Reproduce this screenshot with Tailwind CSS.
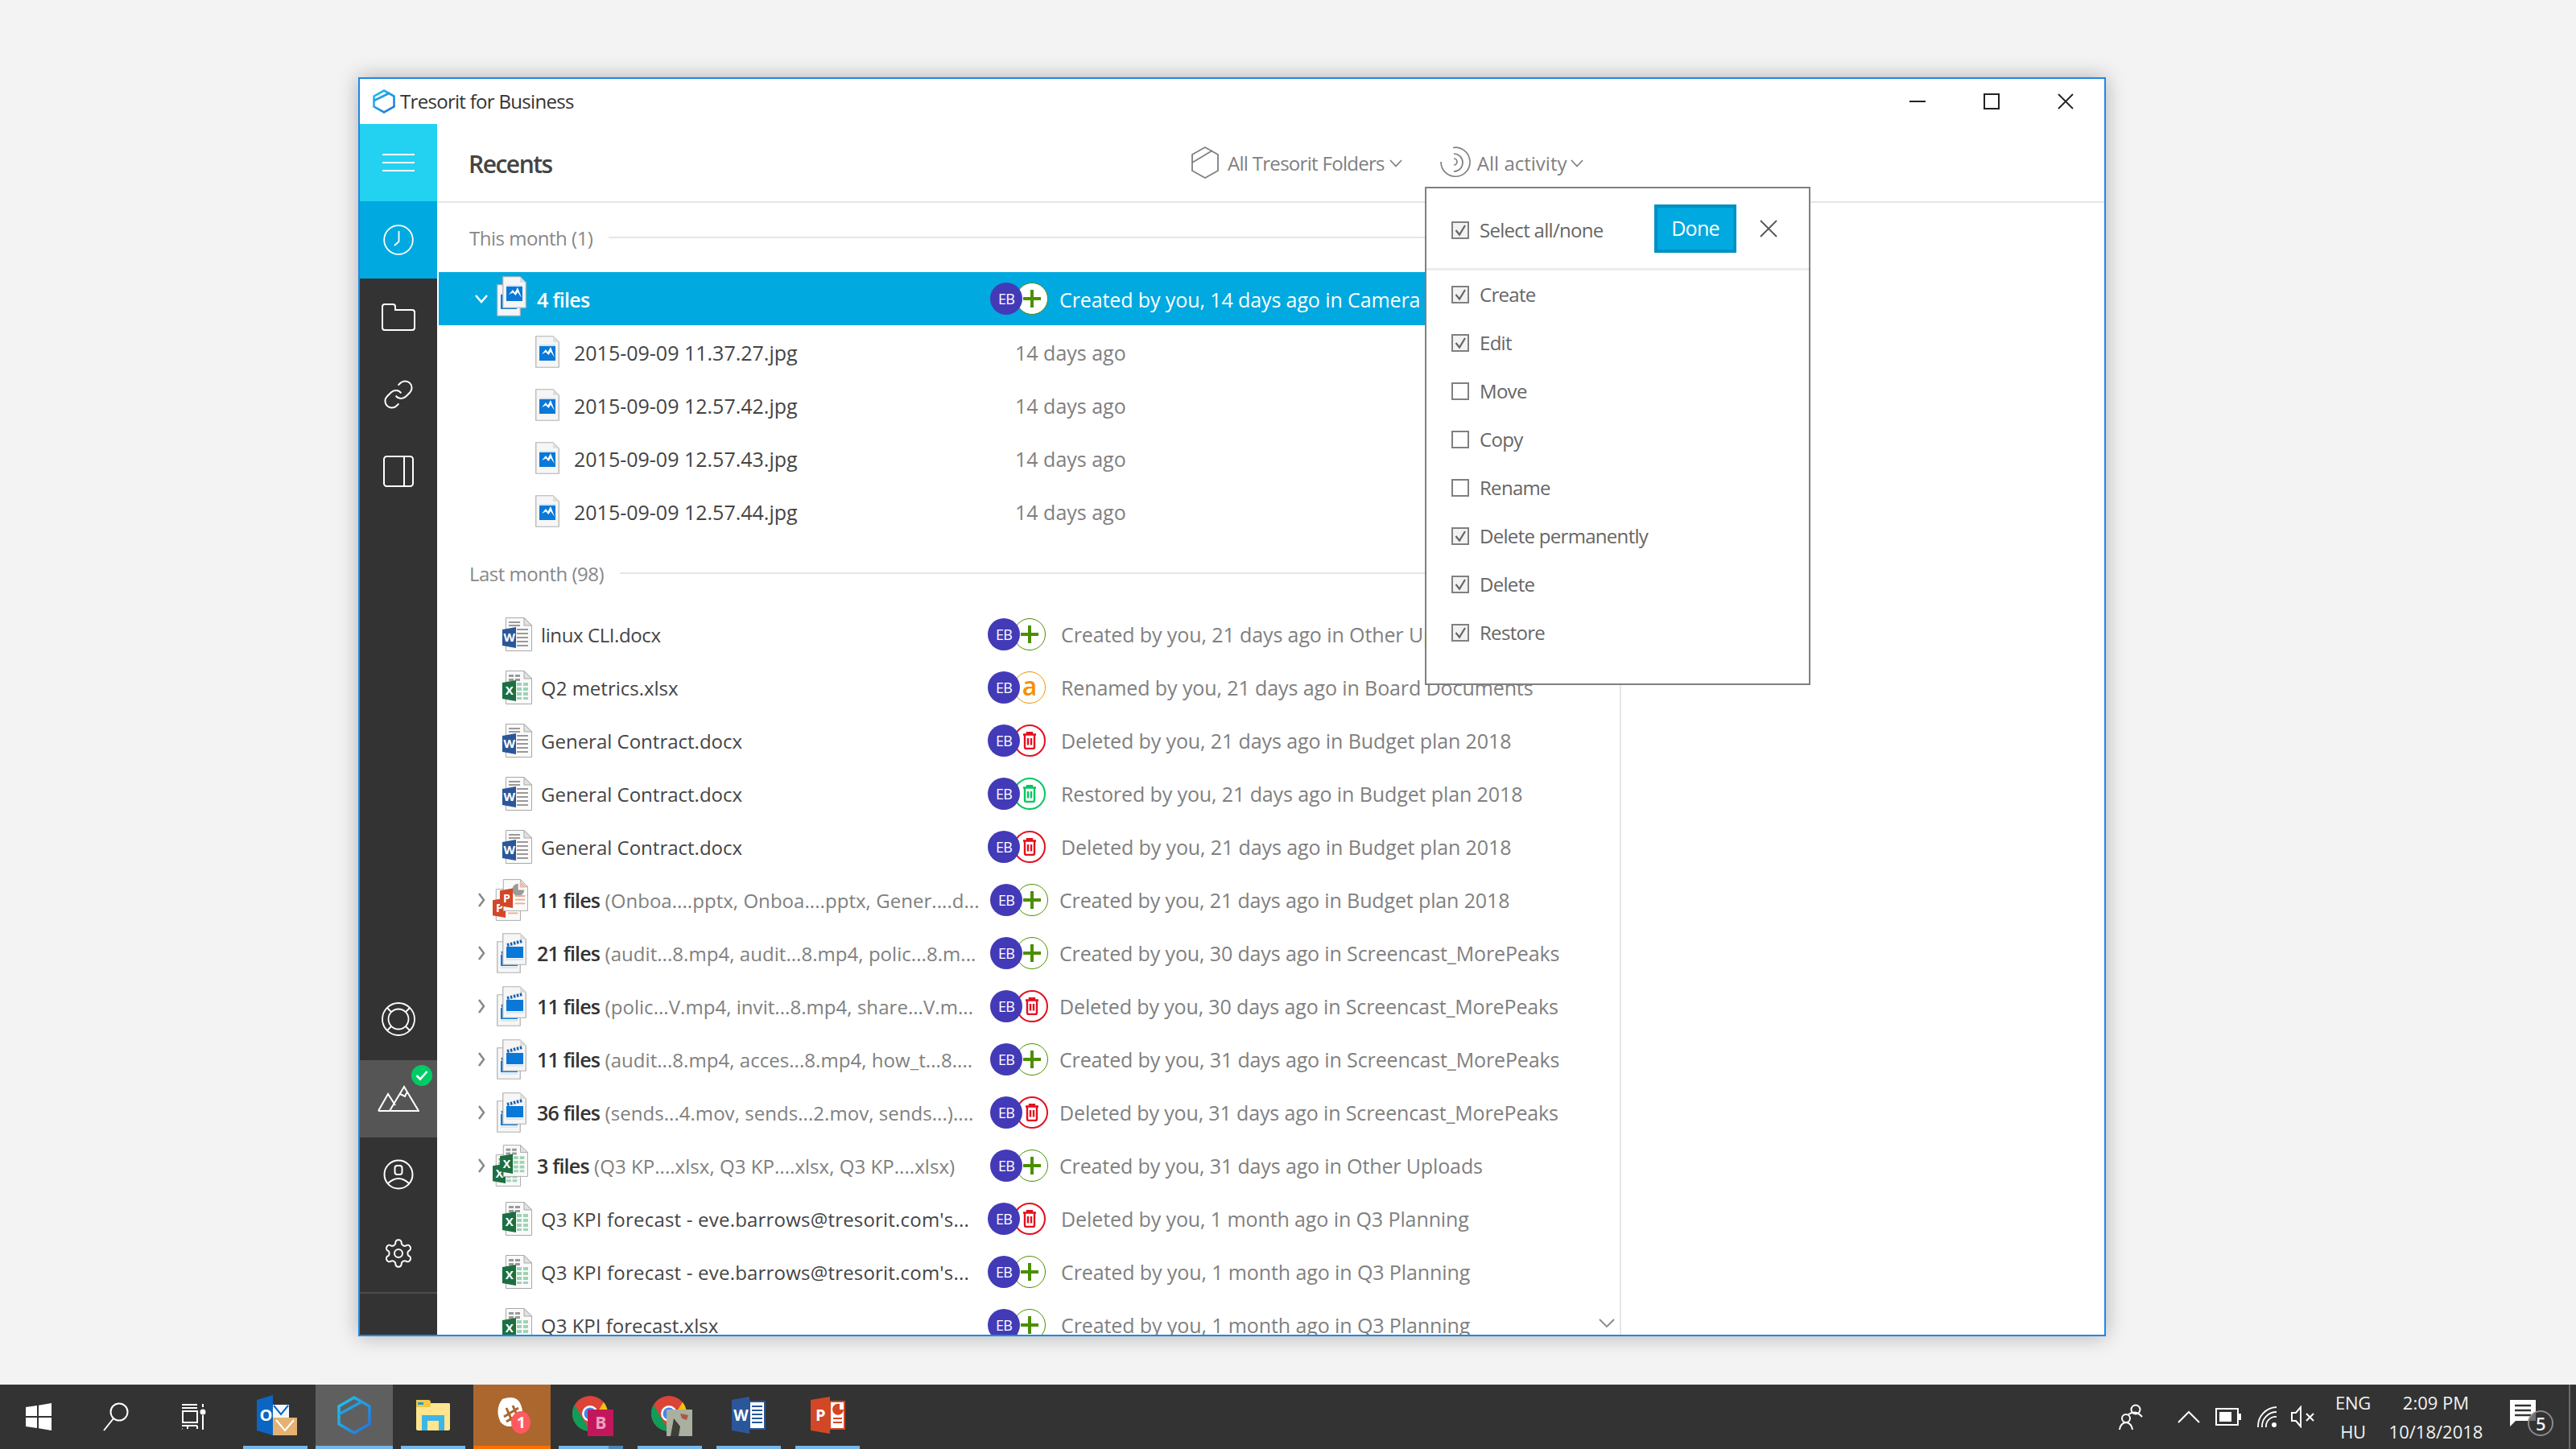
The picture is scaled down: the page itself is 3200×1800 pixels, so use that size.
<!DOCTYPE html>
<html lang="en">
<head>
  <meta charset="UTF-8">
  <title>Tresorit for Business</title>
  <script src="https://cdn.jsdelivr.net/npm/@tailwindcss/browser@4"></script>
</head>
<body class="w-[3200px] h-[1800px] bg-[#f3f3f3] flex flex-col overflow-hidden font-['Open_Sans',sans-serif] text-[24px] tracking-[-0.7px]">

  <!-- shared icons -->
  <svg class="absolute w-0 h-0">
    <defs>
      <linearGradient id="hexGrad" x1="0" y1="0" x2="1" y2="1">
        <stop offset="0" stop-color="#1fc8ee"/>
        <stop offset="1" stop-color="#2470dc"/>
      </linearGradient>
    </defs>
  </svg>
  <svg class="hidden">
    <symbol id="word" viewBox="0 0 37 42">
      <path d="M4.500 .5H27L36.500 10V41.500H4.500Z" fill="#fafafa" stroke="#a8a8a8"/>
      <path d="M27 .5V10H36.500Z" fill="#e2e2e2" stroke="#a8a8a8"/>
      <path d="M8 6h14M8 10h14" stroke="#9a9a9a" stroke-width="2"/>
      <path d="M18 15h14M18 20h14M18 25h14M18 30h14M18 35h14" stroke="#9a9a9a" stroke-width="2"/>
      <path d="M0 15L17 12V38L0 35Z" fill="#2b579a"/>
      <text x="8.500" y="30" font-family="Open Sans" font-size="15" font-weight="700" fill="#fff" text-anchor="middle">W</text>
    </symbol>
    <symbol id="excel" viewBox="0 0 37 42">
      <path d="M4.500 .5H27L36.500 10V41.500H4.500Z" fill="#fafafa" stroke="#a8a8a8"/>
      <path d="M27 .5V10H36.500Z" fill="#e2e2e2" stroke="#a8a8a8"/>
      <path d="M8 5h6v3H8zM16 5h6v3h-6zM8 10h6v3H8zM16 10h6v3h-6z" fill="#9a9a9a"/>
      <path d="M18 15h6v4h-6zM26 15h6v4h-6zM18 21h6v4h-6zM26 21h6v4h-6zM18 27h6v4h-6zM26 27h6v4h-6zM18 33h6v3h-6zM26 33h6v3h-6z" fill="#9fd3b4"/>
      <path d="M0 15L17 12V38L0 35Z" fill="#1d6f42"/>
      <text x="8.500" y="30" font-family="Open Sans" font-size="15" font-weight="700" fill="#fff" text-anchor="middle">X</text>
    </symbol>
    <symbol id="ppt" viewBox="0 0 37 42">
      <path d="M4.500 .5H27L36.500 10V41.500H4.500Z" fill="#fafafa" stroke="#a8a8a8"/>
      <path d="M27 .5V10H36.500Z" fill="#e2e2e2" stroke="#a8a8a8"/>
      <path d="M24 6a8 8 0 1 0 8 8h-8Z" fill="#9a9a9a"/>
      <path d="M26 4a8 8 0 0 1 7 7h-7Z" fill="#f3b9a3"/>
      <path d="M20 22h13M20 27h13M20 32h13" stroke="#f0a88e" stroke-width="2"/>
      <path d="M0 15L17 12V38L0 35Z" fill="#d24726"/>
      <text x="8.500" y="30" font-family="Open Sans" font-size="15" font-weight="700" fill="#fff" text-anchor="middle">P</text>
    </symbol>
    <symbol id="image" viewBox="0 0 30 40">
      <path d="M.75 .75H22L29.250 8V39.250H.75Z" fill="#f6f6f6" stroke="#b0b0b0" stroke-width="1.200"/>
      <path d="M22 .75V8H29.250Z" fill="#dedede"/>
      <rect x="5" y="11" width="20" height="20" fill="#0a78d8"/>
      <path d="M5 11h20v2H5z" fill="#cfe6fa"/>
      <path d="M8 23L13 17L15.500 20.500L19 14L24 27L19 20L16.500 24L13 20.500Z" fill="#fff"/>
    </symbol>
    <symbol id="video" viewBox="0 0 30 40">
      <path d="M.75 .75H22L29.250 8V39.250H.75Z" fill="#f6f6f6" stroke="#b0b0b0" stroke-width="1.200"/>
      <path d="M22 .75V8H29.250Z" fill="#dedede"/>
      <path d="M6 15L25 10" stroke="#1a5fae" stroke-width="4" stroke-dasharray="2.500 1.600"/>
      <rect x="5" y="17" width="21" height="14" fill="#0a78d8"/>
      <path d="M5 33h21" stroke="#cfe3f5" stroke-width="1.500"/>
    </symbol>
    <symbol id="trash" viewBox="0 0 18 22">
      <path d="M6 3V1.200H12V3M1 3.500H17M3 4V19Q3 21 5 21H13Q15 21 15 19V4M7 8V16.500M11 8V16.500" fill="none" stroke="currentColor" stroke-width="2.400"/>
    </symbol>
    <symbol id="hex" viewBox="0 0 34 40">
      <path d="M17 1L33 10V30L17 39L1 30V10Z" fill="none" stroke="currentColor" stroke-width="1.800"/>
      <path d="M1 20L26 5" fill="none" stroke="currentColor" stroke-width="1.800"/>
    </symbol>
    <symbol id="chevDown" viewBox="0 0 16 10">
      <path d="M1 1L8 8.500L15 1" fill="none" stroke="currentColor" stroke-width="1.700"/>
    </symbol>
    <symbol id="check" viewBox="0 0 18 18">
      <path d="M3.500 9L8 14.500L15 3" fill="none" stroke="#666" stroke-width="2.200"/>
    </symbol>
  </svg>

  <div class="flex-1 pt-[96px] pl-[445px]">
    <!-- app window -->
    <div class="relative w-[2171px] h-[1564px] bg-white border-2 border-[#1e88e5] shadow-[0_0_24px_rgba(0,0,0,0.28)] flex flex-col overflow-hidden">

      <!-- title bar -->
      <div class="h-[56px] flex items-center pl-[16px] text-[#333]">
        <svg width="28" height="30" viewBox="0 0 28 30">
          <path d="M14 1.500L26.500 8.500V21.500L14 28.500L1.500 21.500V8.500Z" fill="none" stroke="url(#hexGrad)" stroke-width="2.600"/>
          <path d="M1.500 14L21 4.500" fill="none" stroke="url(#hexGrad)" stroke-width="2.600"/>
        </svg>
        <span class="ml-[6px]">Tresorit for Business</span>
        <div class="ml-auto flex items-center h-full pr-[38px] gap-[72px]">
          <div class="w-[20px] h-[2px] bg-[#222]"></div>
          <div class="w-[20px] h-[20px] border-2 border-[#222]"></div>
          <svg width="20" height="20" viewBox="0 0 20 20"><path d="M1 1L19 19M19 1L1 19" stroke="#222" stroke-width="1.800"/></svg>
        </div>
      </div>

      <div class="flex-1 flex min-h-0">
        <!-- sidebar -->
        <div class="w-[96px] bg-[#333] flex flex-col text-white shrink-0">
          <div class="h-[96px] bg-[#23d2f0] flex flex-col items-center justify-center gap-[8px]">
            <div class="w-[40px] h-[2px] bg-white"></div>
            <div class="w-[40px] h-[2px] bg-white"></div>
            <div class="w-[40px] h-[2px] bg-white"></div>
          </div>
          <div class="h-[96px] bg-[#00a9e0] flex items-center justify-center">
            <svg width="38" height="38" viewBox="0 0 38 38" fill="none" stroke="#fff" stroke-width="1.800"><circle cx="19" cy="19" r="17.800"/><path d="M19.500 8V21L14 26"/></svg>
          </div>
          <div class="h-[96px] flex items-center justify-center">
            <svg width="44" height="36" viewBox="0 0 44 36" fill="none" stroke="#fff" stroke-width="2"><path d="M2 5Q2 2 5 2H15Q18 2 18 5V9H39Q42 9 42 12V31Q42 34 39 34H5Q2 34 2 31Z"/></svg>
          </div>
          <div class="h-[96px] flex items-center justify-center">
            <svg width="40" height="40" viewBox="0 0 24 24" fill="none" stroke="#fff" stroke-width="1.200"><path d="M10 13a5 5 0 0 0 7.540.54l3-3a5 5 0 0 0-7.070-7.070l-1.720 1.710"/><path d="M14 11a5 5 0 0 0-7.540-.54l-3 3a5 5 0 0 0 7.070 7.070l1.710-1.710"/></svg>
          </div>
          <div class="h-[96px] flex items-center justify-center">
            <svg width="38" height="42" viewBox="0 0 38 42" fill="none" stroke="#fff" stroke-width="2"><rect x="1" y="2" width="36" height="37" rx="3.500"/><path d="M26 1V40"/></svg>
          </div>
          <div class="flex-1"></div>
          <div class="h-[96px] pb-[6px] flex items-center justify-center">
            <svg width="44" height="44" viewBox="0 0 44 44" fill="none" stroke="#fff" stroke-width="1.800"><circle cx="22" cy="22" r="20"/><circle cx="22" cy="22" r="12.500"/><path d="M8 8L13 13M36 8L31 13M8 36L13 31M36 36L31 31"/></svg>
          </div>
          <div class="relative h-[96px] bg-[#555] flex items-center justify-center">
            <svg width="52" height="34" viewBox="0 0 52 34" fill="none" stroke="#fff" stroke-width="2"><path d="M1 32H51L33 2L15 32M1 32L13 11L22 25M28 11L34 14L37 8"/></svg>
            <div class="absolute left-[64px] top-[6px] w-[26px] h-[26px] rounded-full bg-[#00cc66] flex items-center justify-center">
              <svg width="16" height="14" viewBox="0 0 16 14" fill="none" stroke="#fff" stroke-width="2.600"><path d="M1.500 7L6 11.500L14.500 2"/></svg>
            </div>
          </div>
          <div class="h-[96px] pb-[4px] flex items-center justify-center">
            <svg width="38" height="38" viewBox="0 0 38 38" fill="none" stroke="#fff" stroke-width="2"><circle cx="19" cy="19" r="17.500"/><rect x="14.500" y="8" width="9" height="11" rx="3"/><path d="M6 30Q19 18 32 30"/></svg>
          </div>
          <div class="h-[96px] flex items-center justify-center">
            <svg width="40" height="40" viewBox="0 0 24 24" fill="none" stroke="#fff" stroke-width="1.200"><path d="M12.220 2h-.44a2 2 0 0 0-2 2v.18a2 2 0 0 1-1 1.730l-.43.25a2 2 0 0 1-2 0l-.15-.08a2 2 0 0 0-2.730.73l-.22.38a2 2 0 0 0 .73 2.730l.15.1a2 2 0 0 1 1 1.720v.51a2 2 0 0 1-1 1.740l-.15.09a2 2 0 0 0-.73 2.730l.22.38a2 2 0 0 0 2.730.73l.15-.08a2 2 0 0 1 2 0l.43.25a2 2 0 0 1 1 1.730V20a2 2 0 0 0 2 2h.44a2 2 0 0 0 2-2v-.18a2 2 0 0 1 1-1.730l.43-.25a2 2 0 0 1 2 0l.15.08a2 2 0 0 0 2.730-.73l.22-.39a2 2 0 0 0-.73-2.730l-.15-.08a2 2 0 0 1-1-1.740v-.5a2 2 0 0 1 1-1.740l.15-.09a2 2 0 0 0 .73-2.730l-.22-.38a2 2 0 0 0-2.730-.73l-.15.08a2 2 0 0 1-2 0l-.43-.25a2 2 0 0 1-1-1.730V4a2 2 0 0 0-2-2z"/><circle cx="12" cy="12" r="3"/></svg>
          </div>
          <div class="h-[2px] bg-[#4d4d4d]"></div>
          <div class="h-[51px]"></div>
        </div>

        <!-- main -->
        <div class="flex-1 flex flex-col min-w-0">
          <div class="h-[98px] border-b-2 border-[#e6e6e6] flex items-center pl-[39px] shrink-0">
            <div class="w-[898px] pt-[2px] text-[30px] font-semibold text-[#444] tracking-[-1.5px]">Recents</div>
            <div class="flex items-center text-[#808080]">
              <svg width="34" height="40" class="text-[#808080]"><use href="#hex"/></svg>
              <span class="ml-[11px] pt-[2px]">All Tresorit Folders</span>
              <svg width="16" height="10" class="ml-[6px] mt-[2px]"><use href="#chevDown"/></svg>
              <svg width="40" height="40" viewBox="0 0 40 40" fill="none" stroke="#808080" stroke-width="1.700" class="ml-[46px]"><path d="M17 1.500A18 18 0 1 1 2 19"/><path d="M18 9A10.500 10.500 0 0 1 18 31"/><path d="M18 15A4 4 0 0 1 18 23"/></svg>
              <span class="ml-[7px] pt-[2px] tracking-[0px]">All activity</span>
              <svg width="16" height="10" class="ml-[5px] mt-[2px]"><use href="#chevDown"/></svg>
            </div>
          </div>

          <div class="flex-1 flex min-h-0">
            <div id="list" class="w-[1471px] border-r-2 border-[#e6e6e6] overflow-hidden relative shrink-0"></div>
          </div>
        </div>
      </div>

      <!-- filter popup -->
      <div class="absolute left-[1323px] top-[134px] w-[479px] h-[619px] bg-white border-2 border-[#808080]">
        <div class="h-[102px] border-b-[3px] border-[#ececec] flex items-center pl-[31px] text-[#666]">
          <div class="mt-[4px] w-[22px] h-[22px] border-2 border-[#808080] bg-[#f2f2f2] flex items-center justify-center"><svg width="18" height="18"><use href="#check"/></svg></div>
          <span class="mt-[4px] ml-[13px] w-[217px]">Select all/none</span>
          <button class="w-[102px] h-[60px] bg-[#00a9e0] border-[4px] border-[#0090c4] text-white text-[25px]">Done</button>
          <svg width="22" height="22" viewBox="0 0 22 22" class="ml-[29px]"><path d="M1 1L21 21M21 1L1 21" stroke="#555" stroke-width="1.800"/></svg>
        </div>
        <div id="filters"></div>
      </div>
    </div>
  </div>

  <!-- taskbar -->
  <div class="h-[80px] bg-[#333] flex text-white shrink-0">
    <div class="w-[96px] flex items-center justify-center">
      <svg width="32" height="34" viewBox="0 0 32 34" fill="#fff"><path d="M0 5L14 3V16H0ZM16 2.700L32 0V16H16ZM0 18H14V31L0 29ZM16 18H32V34L16 31.300Z"/></svg>
    </div>
    <div class="w-[96px] flex items-center justify-center">
      <svg width="34" height="36" viewBox="0 0 34 36" fill="none" stroke="#fff" stroke-width="2"><ellipse cx="21" cy="12" rx="10.500" ry="10.500"/><path d="M14 20L2 35"/></svg>
    </div>
    <div class="w-[96px] flex items-center justify-center">
      <svg width="32" height="34" viewBox="0 0 32 34" fill="none" stroke="#fff" stroke-width="2"><path d="M2 2H21M2 6H21M3 10H21V24H3ZM2 28H21M2 32H2.500M9 28V32M21 28V32M28 1V5M28 15V33"/><circle cx="28" cy="11" r="2.500" fill="#fff"/></svg>
    </div>
    <div class="ml-[6px] flex gap-[2px]" id="apps"></div>

    <div class="ml-auto flex items-center text-[#f2f2f2]">
      <div class="w-[48px] flex justify-center">
        <svg width="30" height="34" viewBox="0 0 30 34" fill="none" stroke="#fff" stroke-width="2"><circle cx="21" cy="8" r="5.500"/><path d="M12 14Q21 8 29 17"/><circle cx="9" cy="19" r="5"/><path d="M1 33Q2 25 9 24Q16 25 17 33"/></svg>
      </div>
      <div class="w-[48px] ml-[24px] flex justify-center">
        <svg width="28" height="16" viewBox="0 0 28 16" fill="none" stroke="#fff" stroke-width="2"><path d="M1 15L14 2L27 15"/></svg>
      </div>
      <div class="w-[48px] ml-[1px] flex justify-center">
        <svg width="32" height="22" viewBox="0 0 32 22"><rect x="1" y="1" width="27" height="20" fill="none" stroke="#fff" stroke-width="2"/><rect x="5" y="5" width="15" height="12" fill="#fff"/><rect x="29" y="7" width="3" height="8" fill="#fff"/></svg>
      </div>
      <div class="w-[48px] ml-[1px] flex justify-center">
        <svg width="26" height="28" viewBox="0 0 26 28" fill="none" stroke="#fff" stroke-width="1.800"><path d="M1 27A24 24 0 0 1 24 2M6 27A18 18 0 0 1 24 8M11 27A12 12 0 0 1 24 14"/><circle cx="21" cy="24" r="3" fill="#fff" stroke="none"/></svg>
      </div>
      <div class="w-[40px] flex justify-center">
        <svg width="30" height="28" viewBox="0 0 30 28" fill="none" stroke="#fff" stroke-width="2"><path d="M1 9H6L12 2V26L6 19H1ZM19 10L28 19M28 10L19 19"/></svg>
      </div>
      <div class="w-[60px] ml-[12px] flex flex-col items-center text-[22px] leading-[36px] tracking-[-0.3px]">
        <span>ENG</span>
        <span>HU</span>
      </div>
      <div class="w-[132px] ml-[7px] flex flex-col items-center text-[22px] leading-[36px] tracking-[0px]">
        <span>2:09 PM</span>
        <span>10/18/2018</span>
      </div>
      <div class="relative w-[48px] h-[48px] ml-[18px] flex justify-center items-start">
        <svg width="34" height="36" viewBox="0 0 34 36" class="mt-[2px]"><path d="M1 1H33V27H8L1 34Z" fill="#fff"/><path d="M7 8H27M7 14H27M7 20H27" stroke="#333" stroke-width="2.500"/></svg>
        <div class="absolute left-[30px] top-[16px] w-[32px] h-[32px] rounded-full bg-[#333]/70 border-2 border-[#8a8a8a] flex items-center justify-center text-[22px] font-semibold">5</div>
      </div>
      <div class="w-[2px] h-full bg-[#6a6a6a] ml-[33px] mr-[7px]"></div>
    </div>
  </div>

  <script>
    const avatar = (action) => {
      const second = {
        add: `<div class="w-10 h-10 -ml-2 rounded-full bg-white border border-[#4b8f00] flex items-center justify-center"><svg width="22" height="22" viewBox="0 0 22 22"><path d="M11 0V22M0 11H22" stroke="#4b8f00" stroke-width="4"/></svg></div>`,
        del: `<div class="w-10 h-10 -ml-2 rounded-full bg-white border-2 border-[#e30f1f] flex items-center justify-center text-[#e30f1f]"><svg width="18" height="22"><use href="#trash"/></svg></div>`,
        res: `<div class="w-10 h-10 -ml-2 rounded-full bg-white border-2 border-[#00c860] flex items-center justify-center text-[#00c860]"><svg width="18" height="22"><use href="#trash"/></svg></div>`,
        ren: `<div class="w-10 h-10 -ml-2 rounded-full bg-white border border-[#f39200] flex items-center justify-center text-[#f39200] text-[32px] font-semibold leading-none pb-[4px] tracking-normal">a</div>`
      }[action];
      return `<div class="flex items-center w-[72px] shrink-0"><div class="relative z-10 w-10 h-10 rounded-full bg-[#433ab8] text-white text-[18px] flex items-center justify-center shrink-0">EB</div>${second}</div>`;
    };

    const fileRow = (icon, name, action, activity) => `
      <div class="h-[66px] flex items-center pl-[81px] whitespace-nowrap">
        <svg width="37" height="42" class="shrink-0"><use href="#${icon}"/></svg>
        <div class="ml-[11px] w-[555px] shrink-0 text-[#444] tracking-normal pt-[1px]">${name}</div>
        ${avatar(action)}
        <div class="ml-[19px] text-[#808080] text-[25px] tracking-[-0.1px] pt-[1px]">${activity}</div>
      </div>`;

    const groupIcon = (icon) => icon === "video" || icon === "image"
      ? `<svg width="37" height="50" viewBox="0 0 37 50" class="ml-[5px]"><use href="#${icon}" x="0" y="10" width="30" height="40"/><use href="#${icon}" x="7" y="0" width="30" height="40"/></svg>`
      : `<svg width="44" height="52" viewBox="0 0 44 52"><use href="#${icon}" x="0" y="12" width="35" height="40"/><use href="#${icon}" x="9" y="0" width="35" height="40"/></svg>`;

    const groupRow = (icon, count, detail, action, activity) => `
      <div class="h-[66px] flex items-center pl-[47px] whitespace-nowrap">
        <svg width="16" height="20" viewBox="0 0 16 20" class="shrink-0" fill="none" stroke="#888" stroke-width="2.500"><path d="M5 2L11 10L5 18"/></svg>
        <div class="ml-[6px] w-[44px] shrink-0">${groupIcon(icon)}</div>
        <div class="ml-[11px] w-[563px] shrink-0 text-[#808080] tracking-[0.05px] pt-[1px]"><span class="text-[#333] font-semibold text-[25px] tracking-[-0.8px]">${count}</span> ${detail}</div>
        ${avatar(action)}
        <div class="ml-[14px] text-[#808080] text-[25px] tracking-[-0.13px] pt-[1px]">${activity}</div>
      </div>`;

    const childRow = (name) => `
      <div class="h-[66px] flex items-center pl-[122px] whitespace-nowrap">
        <svg width="30" height="40" class="shrink-0"><use href="#image"/></svg>
        <div class="ml-[18px] w-[548px] shrink-0 text-[#444] text-[25px] tracking-normal pt-[4px]">${name}</div>
        <div class="text-[#808080] text-[25px] tracking-normal pt-[4px]">14 days ago</div>
      </div>`;

    const section = (label, h) => `
      <div class="${h} flex items-center pl-[40px] text-[#888] tracking-[-0.5px]">
        <span class="whitespace-nowrap pt-[2px]">${label}</span>
        <div class="flex-1 h-[2px] bg-[#e6e6e6] ml-[20px]"></div>
      </div>`;

    const longName = "Q3 KPI forecast - eve.barrows@tresorit.com's...";

    document.getElementById("list").innerHTML =
      section("This month (1)", "h-[86px]") +
      `<div class="ml-[2px] h-[66px] bg-[#00a9e0] flex items-center pl-[45px] whitespace-nowrap text-white">
        <svg width="16" height="12" class="shrink-0 text-white" viewBox="0 0 16 12" fill="none" stroke="#fff" stroke-width="2.500"><path d="M1 2L8 10L15 2"/></svg>
        <div class="ml-[6px] w-[44px] shrink-0 -mt-[6px]">${groupIcon("image")}</div>
        <div class="ml-[11px] w-[563px] shrink-0 font-semibold text-[25px] pt-[3px]">4 files</div>
        ${avatar("add")}
        <div class="ml-[14px] text-[25px] tracking-[-0.1px] pt-[3px]">Created by you, 14 days ago in Camera</div>
      </div>` +
      childRow("2015-09-09 11.37.27.jpg") +
      childRow("2015-09-09 12.57.42.jpg") +
      childRow("2015-09-09 12.57.43.jpg") +
      childRow("2015-09-09 12.57.44.jpg") +
      section("Last month (98)", "h-[87px]") +
      fileRow("word", `<span class="tracking-[-0.4px]">linux CLI.docx</span>`, "add", "Created by you, 21 days ago in Other Uploads") +
      fileRow("excel", "Q2 metrics.xlsx", "ren", "Renamed by you, 21 days ago in Board Documents") +
      fileRow("word", "General Contract.docx", "del", "Deleted by you, 21 days ago in Budget plan 2018") +
      fileRow("word", "General Contract.docx", "res", "Restored by you, 21 days ago in Budget plan 2018") +
      fileRow("word", "General Contract.docx", "del", "Deleted by you, 21 days ago in Budget plan 2018") +
      groupRow("ppt", "11 files", "(Onboa....pptx, Onboa....pptx, Gener....d...", "add", "Created by you, 21 days ago in Budget plan 2018") +
      groupRow("video", "21 files", "(audit...8.mp4, audit...8.mp4, polic...8.m...", "add", "Created by you, 30 days ago in Screencast_MorePeaks") +
      groupRow("video", "11 files", "(polic...V.mp4, invit...8.mp4, share...V.m...", "del", "Deleted by you, 30 days ago in Screencast_MorePeaks") +
      groupRow("video", "11 files", "(audit...8.mp4, acces...8.mp4, how_t...8....", "add", "Created by you, 31 days ago in Screencast_MorePeaks") +
      groupRow("video", "36 files", "(sends...4.mov, sends...2.mov, sends...)....", "del", "Deleted by you, 31 days ago in Screencast_MorePeaks") +
      groupRow("excel", "3 files", "(Q3 KP....xlsx, Q3 KP....xlsx, Q3 KP....xlsx)", "add", "Created by you, 31 days ago in Other Uploads") +
      fileRow("excel", `<span class="tracking-[0.2px]">${longName}</span>`, "del", "Deleted by you, 1 month ago in Q3 Planning") +
      fileRow("excel", `<span class="tracking-[0.2px]">${longName}</span>`, "add", "Created by you, 1 month ago in Q3 Planning") +
      fileRow("excel", "Q3 KPI forecast.xlsx", "add", "Created by you, 1 month ago in Q3 Planning") +
      `<svg width="20" height="12" viewBox="0 0 20 12" fill="none" stroke="#888" stroke-width="1.800" class="absolute right-[6px] bottom-[8px]"><path d="M1 1L10 10L19 1"/></svg>`;

    // Activity filter checkboxes
    const filters = [["Create", 1], ["Edit", 1], ["Move", 0], ["Copy", 0], ["Rename", 0], ["Delete permanently", 1], ["Delete", 1], ["Restore", 1]];
    document.getElementById("filters").innerHTML = filters.map(([label, on]) => `
      <div class="h-[60px] flex items-center pl-[31px] text-[#666]">
        <div class="w-[22px] h-[22px] border-2 border-[#808080] ${on ? "bg-[#f2f2f2]" : "bg-white"} flex items-center justify-center">${on ? '<svg width="18" height="18"><use href="#check"/></svg>' : ""}</div>
        <span class="ml-[13px]">${label}</span>
      </div>`).join("");

    // Taskbar apps
    const chrome = (overlay) => `<svg width="52" height="52" viewBox="0 0 52 52" class="ml-[5px]">
        <circle cx="22" cy="24" r="22" fill="#db4437"/>
        <path d="M3 13L14 32L22 46A22 22 0 0 1 3 13Z" fill="#0f9d58"/>
        <path d="M22 46L32 28L44 24A22 22 0 0 1 22 46Z" fill="#f4c20d" transform="rotate(-40 22 24)"/>
        <circle cx="22" cy="24" r="10" fill="#fff"/><circle cx="22" cy="24" r="7.500" fill="#4285f4"/>${overlay}</svg>`;
    const apps = [
      { icon: `<svg width="50" height="50" viewBox="0 0 50 50" class="ml-[3px]"><path d="M0 6L20 0V50L0 44Z" fill="#0a66c2"/><path d="M20 12H40V34H20Z" fill="#f4f8fc"/><path d="M21 13L30 24L39 13" fill="none" stroke="#0a66c2" stroke-width="2"/><text x="11" y="32" font-family="Open Sans" font-size="20" font-weight="700" fill="#fff" text-anchor="middle">O</text><rect x="20" y="28" width="30" height="22" fill="#e5b273"/><path d="M24 31L35 44L46 31" fill="none" stroke="#fff" stroke-width="2"/></svg>` },
      { bg: "bg-[#5f5f5f]", icon: `<svg width="42" height="48" viewBox="0 0 42 48"><path d="M21 2L40 13V35L21 46L2 35V13Z" fill="none" stroke="url(#hexGrad)" stroke-width="3.500"/><path d="M2 23L31 7" stroke="url(#hexGrad)" stroke-width="3.500"/></svg>` },
      { icon: `<svg width="44" height="40" viewBox="0 0 44 40"><path d="M1 4Q1 1 4 1H14L18 5H42Q43 5 43 7V37Q43 39 41 39H3Q1 39 1 37Z" fill="#ffe58f"/><path d="M1 1H16Q19 1 19 4V8Q19 10 16 10H1Z" fill="#f5c842"/><path d="M3 4H10V7H3Z" fill="#1c9de0"/><path d="M8 20H36V39H29V27H15V39H8Z" fill="#3db5e6"/></svg>` },
      { bg: "bg-[#ab672e]", line: "bg-[#ff7000]", icon: `<svg width="44" height="46" viewBox="0 0 44 46" class="ml-[3px]"><path d="M8 3Q26 -3 31 10Q36 22 28 32Q16 42 6 32Q-2 16 8 3Z" fill="#fff"/><path d="M13 14L20 30M21 11L28 27M10 25L28 14M13 31L30 21" stroke="#a8662f" stroke-width="3"/><ellipse cx="31" cy="32" rx="12" ry="14" fill="#ff5a5f"/><text x="31" y="39" font-family="Open Sans" font-size="19" font-weight="700" fill="#fff" text-anchor="middle">1</text></svg>` },
      { split: true, icon: chrome(`<rect x="19" y="19" width="32" height="33" fill="#c2185b"/><text x="35" y="43" font-family="Open Sans" font-size="21" font-weight="700" fill="#f0a0c0" text-anchor="middle">B</text>`) },
      { icon: chrome(`<rect x="19" y="19" width="32" height="33" fill="#a9b0a0"/><path d="M24 52L28 30L36 40L34 52Z" fill="#3f3f38"/><path d="M36 24L46 26L44 32L38 30Z" fill="#a85a44"/>`) },
      { icon: `<svg width="46" height="46" viewBox="0 0 46 46" class="ml-[3px]"><path d="M0 4L22 0V46L0 42Z" fill="#2b579a"/><rect x="22" y="6" width="19" height="34" fill="#fff" stroke="#2b579a" stroke-width="2"/><path d="M25 12H38M25 17H38M25 22H38M25 27H38M25 32H38" stroke="#2b579a" stroke-width="2"/><text x="11" y="30" font-family="Open Sans" font-size="19" font-weight="700" fill="#fff" text-anchor="middle">W</text></svg>` },
      { icon: `<svg width="46" height="46" viewBox="0 0 46 46" class="ml-[3px]"><path d="M0 4L24 0V46L0 42Z" fill="#d24726"/><rect x="24" y="6" width="18" height="34" fill="#fff" stroke="#d24726" stroke-width="2"/><path d="M36 9a7 7 0 1 0 5 7h-5Z" fill="#d24726"/><path d="M28 27H39M28 32H39" stroke="#d24726" stroke-width="2"/><text x="12" y="30" font-family="Open Sans" font-size="20" font-weight="700" fill="#fff" text-anchor="middle">P</text></svg>` }
    ];
    document.getElementById("apps").innerHTML = apps.map(a => `
      <div class="w-[96px] h-full flex flex-col ${a.bg || ""}">
        <div class="flex-1 flex items-center justify-center">${a.icon}</div>
        <div class="h-1 ${a.bg ? "" : "mx-2"} ${a.line || "bg-[#76b6e8]"} flex justify-end">${a.split ? '<div class="w-[18px] h-full bg-[#4f86b3]"></div>' : ""}</div>
      </div>`).join("");
  </script>
</body>
</html>
